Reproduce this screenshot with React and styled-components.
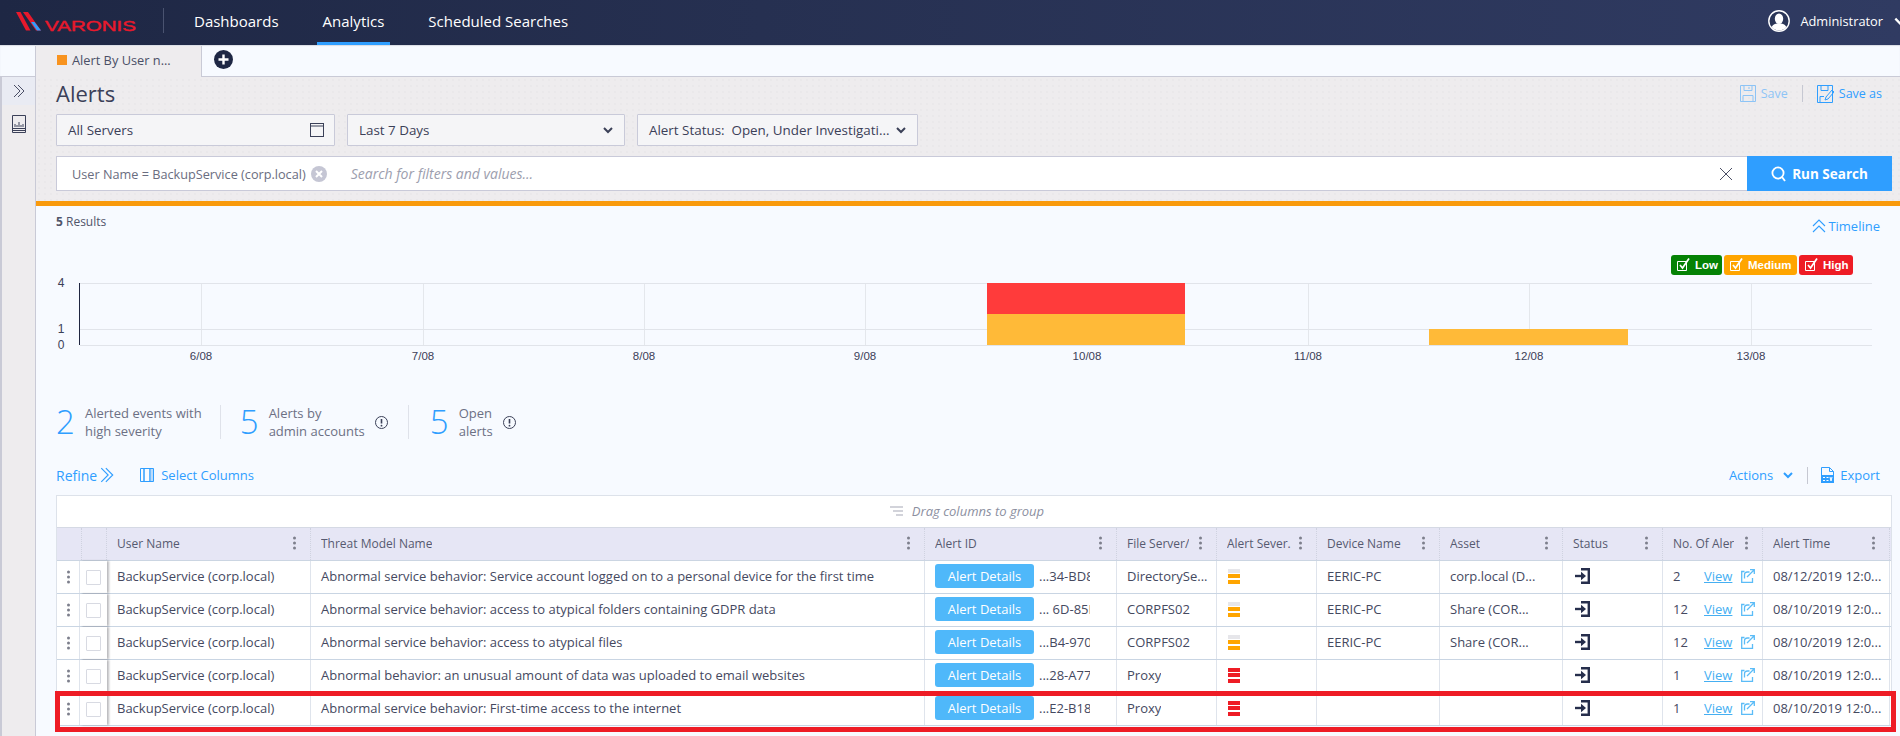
import React from "react";
import styled, { createGlobalStyle } from "styled-components";

const Global = createGlobalStyle`
  html, body { margin: 0; padding: 0; height: 736px; overflow: hidden; background: #f7faff; }
  body { font-family: "Open Sans", "Noto Sans", sans-serif; color: #3b4058; }
  * { box-sizing: border-box; }
`;

const BLUE = "#2f9eff";
const COLS = "23px 27px 204px 614px 192px 100px 100px 123px 123px 100px 100px 127px";

const Page = styled.div`
  width: 1900px;
  height: 736px;
  overflow: hidden;
  display: flex;
  flex-direction: column;
`;

/* ---------- top bar ---------- */
const TopBar = styled.header`
  height: 45px;
  flex: none;
  display: flex;
  align-items: stretch;
  background: linear-gradient(90deg, #1e2744 0%, #263051 40%, #303b62 100%);
  color: #fff;
`;
const LogoBox = styled.div`
  width: 164px;
  display: flex;
  align-items: center;
  position: relative;
  &::after {
    content: "";
    position: absolute;
    right: 0;
    top: 8px;
    height: 25px;
    width: 1px;
    background: #4a5370;
  }
`;
const Nav = styled.nav`
  display: flex;
  gap: 32px;
  padding-left: 24px;
`;
const NavItem = styled.a`
  display: flex;
  align-items: center;
  padding: 0 6px 4px;
  font-size: 15px;
  border-bottom: 3px solid ${(p) => (p.$active ? BLUE : "transparent")};
  height: 45px;
  padding-top: 3px;
`;
const UserBox = styled.div`
  margin-left: auto;
  display: flex;
  align-items: center;
  font-size: 12.8px;
  gap: 10px;
  margin-right: -7px;
  padding-bottom: 4px;
`;

/* ---------- tabs ---------- */
const TabBar = styled.div`
  height: 32px;
  flex: none;
  display: flex;
  align-items: stretch;
  padding-left: 35px;
  background: #f7faff;
  border-bottom: 1px solid #c9cad6;
  box-shadow: inset 0 1px 1px #d9dce4;
`;
const Tab = styled.div`
  width: 167px;
  height: 32px;
  margin-top: 1px;
  padding-left: 21px;
  display: flex;
  align-items: center;
  gap: 5px;
  background: #eeecee;
  border: 1px solid #c9cad6;
  border-width: 0 1px 0 1px;
  font-size: 12.8px;
  color: #4b4f66;
  padding-bottom: 4px;
`;
const TabSquare = styled.span`
  width: 10px;
  height: 10px;
  background: #f8931f;
`;
const AddTab = styled.span`
  margin-left: 12px;
  align-self: center;
  margin-bottom: 3px;
  display: flex;
`;

/* ---------- body ---------- */
const Body = styled.div`
  flex: 1;
  display: flex;
  min-height: 0;
`;
const Sidebar = styled.aside`
  width: 36px;
  flex: none;
  background: #eeecee;
  border-left: 2px solid #c9cad6;
  border-right: 1px solid #c9cad6;
  display: flex;
  flex-direction: column;
  align-items: center;
  color: #4b4f66;
`;
const SideToggle = styled.div`
  width: 100%;
  height: 28px;
  background: #e9ebf3;
  display: flex;
  align-items: center;
  justify-content: center;
  margin-bottom: 10px;
`;
const Main = styled.main`
  flex: 1;
  min-width: 0;
  display: flex;
  flex-direction: column;
`;
const Toolbar = styled.section`
  height: 124px;
  flex: none;
  padding: 0 8px 0 20px;
  background-color: #eeecee;
  background-image: radial-gradient(#e4e2e5 0.6px, transparent 0.8px);
  background-size: 6px 6px;
`;
const TitleRow = styled.div`
  height: 37px;
  display: flex;
  align-items: center;
  justify-content: space-between;
`;
const Title = styled.h1`
  margin: 0 0 6px;
  font-size: 22px;
  font-weight: 400;
  color: #3b4058;
  line-height: 30px;
`;
const TitleActions = styled.div`
  display: flex;
  align-items: center;
  font-size: 12.5px;
  color: ${BLUE};
  padding-right: 10px;
  padding-bottom: 4px;
`;
const TitleAction = styled.span`
  display: flex;
  align-items: center;
  gap: 5px;
  opacity: ${(p) => (p.$dim ? 0.5 : 1)};
`;
const VSep = styled.span`
  width: 1px;
  height: 17px;
  background: #c6c8d2;
  margin: 0 ${(p) => p.$gap || 15}px;
`;
const FilterRow = styled.div`
  display: flex;
  gap: 12px;
  height: 32px;
`;
const Select = styled.div`
  width: ${(p) => p.$w}px;
  height: 32px;
  padding: 0 10px 0 11px;
  display: flex;
  align-items: center;
  justify-content: space-between;
  background: #f5f5f7;
  border: 1px solid #c9cad9;
  border-radius: 1px;
  font-size: 13.4px;
  font-weight: 500;
  color: #3b4058;
  white-space: pre;
`;
const SearchRow = styled.div`
  margin-top: 10px;
  height: 35px;
  display: flex;
`;
const SearchBox = styled.div`
  flex: 1;
  display: flex;
  align-items: center;
  background: #fff;
  border: 1px solid #c9cad9;
  border-right: 0;
  padding: 0 14px 0 15px;
  font-size: 12.7px;
`;
const Chip = styled.span`
  display: flex;
  align-items: center;
  gap: 5px;
  color: #6a6d80;
  white-space: pre;
`;
const Placeholder = styled.span`
  margin-left: 24px;
  font-style: italic;
  font-size: 14px;
  color: #9c9eae;
  flex: 1;
`;
const RunButton = styled.button`
  width: 145px;
  border: 0;
  background: ${BLUE};
  color: #fff;
  font: 700 13.5px "Open Sans", sans-serif;
  display: flex;
  align-items: center;
  justify-content: center;
  gap: 6px;
`;
const Results = styled.section`
  flex: 1;
  min-height: 0;
  border-top: 5px solid #f99a0c;
  padding: 0 8px 0 20px;
  background: #f7faff;
`;
const ResultsHead = styled.div`
  height: 49px;
  display: flex;
  justify-content: space-between;
  align-items: flex-start;
  font-size: 12px;
  color: #50546a;
  padding-top: 7px;
`;
const TimelineLink = styled.span`
  display: flex;
  align-items: center;
  gap: 2px;
  margin: 4px 12px 0 0;
  font-size: 13px;
  color: ${BLUE};
`;
const Legend = styled.div`
  height: 20px;
  display: flex;
  justify-content: flex-end;
  gap: 2px;
  padding-right: 39px;
`;
const LegendTag = styled.span`
  height: 20px;
  width: ${(p) => p.$w}px;
  padding-left: 5px;
  display: flex;
  align-items: center;
  gap: 3px;
  background: ${(p) => p.$c};
  border-radius: 3px;
  font: 700 11.5px "Liberation Sans", Arial, sans-serif;
  color: #fff;
`;
const ChartSvg = styled.svg`
  display: block;
  font-family: "Liberation Sans", Arial, sans-serif;
`;
const Stats = styled.div`
  margin-top: 35px;
  height: 34px;
  display: flex;
`;
const Stat = styled.div`
  display: flex;
  align-items: center;
  padding: 0 ${(p) => p.$pr}px 0 ${(p) => p.$pl}px;
  border-right: ${(p) => (p.$last ? "0" : "1px solid #dfe2ea")};
`;
const StatNum = styled.span`
  font-size: 33px;
  font-weight: 300;
  line-height: 34px;
  color: ${BLUE};
  width: 29px;
`;
const StatLabel = styled.span`
  font-size: 13px;
  line-height: 18px;
  color: #6c7084;
  white-space: pre;
`;
const InfoIcon = styled.span`
  display: flex;
  margin-left: 10px;
  color: #3b4058;
`;
const ActionRow = styled.div`
  margin-top: 24px;
  height: 24px;
  display: flex;
  align-items: center;
  font-size: 13px;
  color: ${BLUE};
`;
const RefineLink = styled.span`
  display: flex;
  align-items: center;
  gap: 2px;
  font-size: 14px;
  margin-right: 25px;
`;
const IconLink = styled.span`
  display: flex;
  align-items: center;
  gap: ${(p) => p.$gap || 7}px;
`;
const RowEnd = styled.div`
  margin-left: auto;
  display: flex;
  align-items: center;
  padding-right: 12px;
`;
const Table = styled.div`
  margin-top: 8px;
  width: 1836px;
  background: #fff;
  border: 1px solid #dde2ea;
  border-bottom: 0;
`;
const GroupBar = styled.div`
  height: 31px;
  display: flex;
  align-items: center;
  justify-content: center;
  gap: 9px;
  font-size: 13px;
  font-style: italic;
  color: #8c8f9f;
  padding: 0 14px 2px 0;
`;
const HeadRow = styled.div`
  display: grid;
  grid-template-columns: ${COLS};
  height: 34px;
  background: #e6e6f5;
  border-top: 1px solid #d5d9e4;
  border-bottom: 1px solid #cbd5e2;
`;
const HeadCell = styled.div`
  display: flex;
  align-items: center;
  justify-content: space-between;
  padding: 0 14px 2px 10px;
  font-size: 12px;
  color: #565a70;
  border-right: 1px dotted #cfd2e0;
  white-space: nowrap;
  overflow: hidden;
`;
const Row = styled.div`
  display: grid;
  grid-template-columns: ${COLS};
  height: 33px;
  background: #fff;
  border-bottom: 1px solid #c9d5e3;
  position: relative;
  ${(p) =>
    p.$flagged &&
    `&::after {
      content: "";
      position: absolute;
      left: -2px;
      right: -5px;
      top: -2px;
      bottom: -7px;
      border: 5px solid #ee1c25;
      pointer-events: none;
    }`}
`;
const Cell = styled.div`
  display: flex;
  align-items: center;
  min-width: 0;
  padding: 0 ${(p) => p.$pr ?? 8}px 2px 10px;
  font-size: 13px;
  color: #45495f;
  border-right: 1px solid #dfe4ec;
  white-space: nowrap;
  overflow: hidden;
`;
const Clip = styled.span`
  overflow: hidden;
  text-overflow: ellipsis;
`;
const HandleCell = styled.div`
  display: flex;
  align-items: center;
  justify-content: center;
  border-right: 1px solid #dfe4ec;
`;
const CheckCell = styled.div`
  display: flex;
  align-items: center;
  justify-content: center;
  box-shadow: 2px 0 2px rgba(60, 60, 70, 0.35);
  position: relative;
`;
const CheckBox = styled.span`
  width: 15px;
  height: 15px;
  border: 1px solid #d8dae2;
  border-radius: 1px;
  background: #fff;
`;
const DetailsButton = styled.span`
  flex: none;
  width: 99px;
  height: 24px;
  margin-right: 5px;
  display: flex;
  align-items: center;
  justify-content: center;
  background: #4fb8fa;
  border-radius: 3px;
  color: #fff;
  font-size: 13px;
`;
const IdTail = styled.span`
  width: 51px;
  overflow: hidden;
`;
const SeverityIcon = styled.span`
  display: flex;
  flex-direction: column;
  gap: 1.5px;
  margin-left: 1px;
`;
const SeverityBar = styled.i`
  display: block;
  width: 12px;
  height: 4px;
  background: ${(p) => p.$c};
`;
const CountCell = styled(Cell)`
  padding-right: 6px;
`;
const Count = styled.span`
  width: 31px;
`;
const ViewLink = styled.span`
  color: #45aff2;
  text-decoration: underline;
  margin-right: 9px;
`;
const StatusIconBox = styled.span`
  display: flex;
  color: #262e4c;
  margin-left: 2px;
`;

/* ---------- drawings ---------- */
const Logo = () => (
  <svg width="130" height="28" viewBox="0 0 130 28" style={{ marginLeft: 14 }}>
    <polygon points="2,3 6.5,3 16.5,21.5 12,21.5" fill="#e8192c" />
    <polygon points="9,3 14,3 27,21.5 22,21.5" fill="#e8192c" />
    <polygon points="17,13 20.5,13 27,21.5 23,21.5" fill="#2f9eff" />
    <text x="31" y="22" fontFamily="Liberation Sans, Arial, sans-serif" fontWeight="400" fontSize="15.3" fill="#e8192c" stroke="#e8192c" strokeWidth="0.4" textLength="91" lengthAdjust="spacingAndGlyphs">VARONIS</text>
  </svg>
);
const Kebab = () => (
  <svg width="3" height="14" viewBox="0 0 3 14" style={{ flex: "none" }}>
    <circle cx="1.5" cy="2" r="1.5" fill="#7d7f8c" />
    <circle cx="1.5" cy="7" r="1.5" fill="#7d7f8c" />
    <circle cx="1.5" cy="12" r="1.5" fill="#7d7f8c" />
  </svg>
);
const Chevron = ({ s = 12, w = 2 }) => (
  <svg width={s} height={s} viewBox="0 0 12 12" fill="none" stroke="currentColor" strokeWidth={w}>
    <path d="M2 4l4 4 4-4" />
  </svg>
);
const DoubleRight = ({ s = 14, w = 1 }) => (
  <svg width={s} height={s} viewBox="0 0 14 14" fill="none" stroke="currentColor" strokeWidth={w}>
    <path d="M2 1l6 6-6 6M6 1l6 6-6 6" />
  </svg>
);
const DoubleUp = () => (
  <svg width="14" height="14" viewBox="0 0 14 14" fill="none" stroke="currentColor" strokeWidth="1.1">
    <path d="M1 7l6-6 6 6M1 13l6-6 6 6" />
  </svg>
);
const CalendarBox = () => (
  <svg width="14" height="14" viewBox="0 0 14 14" fill="none" stroke="#3b4058">
    <rect x="0.5" y="0.5" width="13" height="13" />
    <path d="M0 3h14" />
  </svg>
);
const SaveIcon = () => (
  <svg width="16" height="17" viewBox="0 0 16 17" fill="none" stroke="currentColor">
    <path d="M.5.5h15v16H.5z" />
    <path d="M4 .5v5h8v-5M3 16.5v-6h10v6M9 2v2" />
  </svg>
);
const SaveAsIcon = () => (
  <svg width="17" height="18" viewBox="0 0 17 18" fill="none" stroke="currentColor">
    <path d="M.5.5h15v17H.5z" />
    <path d="M4 .5v5h7v-5M3 17.5v-6h4M8 15l1-3 6-7 2 2-6 7-3 1z" />
  </svg>
);
const SearchIcon = () => (
  <svg width="15" height="16" viewBox="0 0 15 16" fill="none" stroke="#fff" strokeWidth="1.8">
    <circle cx="7" cy="7" r="5.6" />
    <path d="M11 11l3 4" />
  </svg>
);
const ClearX = () => (
  <svg width="14" height="14" viewBox="0 0 14 14" stroke="#4b4f66">
    <path d="M1 1l12 12M13 1L1 13" />
  </svg>
);
const ChipClose = () => (
  <svg width="16" height="16" viewBox="0 0 16 16">
    <circle cx="8" cy="8" r="8" fill="#c5c6d4" />
    <path d="M5 5l6 6M11 5l-6 6" stroke="#fff" strokeWidth="2" />
  </svg>
);
const PlusCircle = () => (
  <svg width="19" height="19" viewBox="0 0 19 19">
    <circle cx="9.5" cy="9.5" r="9.5" fill="#1e2744" />
    <path d="M9.5 4.5v10M4.5 9.5h10" stroke="#fff" strokeWidth="2.4" />
  </svg>
);
const UserIcon = () => (
  <svg width="22" height="22" viewBox="0 0 22 22">
    <circle cx="11" cy="11" r="10.2" fill="#2a3557" stroke="#fff" strokeWidth="1.4" />
    <ellipse cx="11" cy="8.8" rx="4.2" ry="5.2" fill="#fff" />
    <path d="M3.5 17c2-3 4.5-3.4 7.5-3.4s5.5.4 7.5 3.4a10 10 0 0 1-15 0z" fill="#fff" />
  </svg>
);
const ReportIcon = () => (
  <svg width="14" height="18" viewBox="0 0 14 18" fill="none" stroke="#3b4058">
    <path d="M.5.5h13v17H.5z" />
    <path d="M3 9v3M5 10v2M7 7v5M9 10v2M11 9v3" />
    <path d="M.5 13.5h13M.5 15.5h13" />
  </svg>
);
const BoxCheck = () => (
  <svg width="16" height="16" viewBox="0 0 16 16" fill="none" stroke="#fff">
    <path d="M1.5 4.5h9v9h-9z" />
    <path d="M4 8l2.5 3L13 1.5" strokeWidth="1.7" />
  </svg>
);
const InfoCircle = () => (
  <svg width="13" height="13" viewBox="0 0 13 13" fill="none" stroke="currentColor">
    <circle cx="6.5" cy="6.5" r="6" />
    <path d="M6.5 3v4.5" strokeWidth="1.6" />
    <circle cx="6.5" cy="9.7" r="0.9" fill="currentColor" stroke="none" />
  </svg>
);
const ColumnsIcon = () => (
  <svg width="14" height="14" viewBox="0 0 14 14" fill="#bcdcfb" stroke="currentColor">
    <path d="M.5.5h3.5v13H.5zM4 .5h6v13H4z" fill="none" />
    <path d="M10 .5h3.5v13H10z" />
  </svg>
);
const ExportIcon = () => (
  <svg width="13" height="16" viewBox="0 0 13 16" fill="none" stroke="currentColor">
    <path d="M.5 8V.5h8l4 4V8M8.5.5v4h4" />
    <rect x="0" y="8" width="13" height="8" fill="currentColor" stroke="none" />
    <path d="M2 10.5h2M2 13.5h2M5.5 10.5h2M5.5 13.5h2M9 10l1 4 1-4" stroke="#fff" />
  </svg>
);
const GroupIcon = () => (
  <svg width="13" height="10" viewBox="0 0 13 10" stroke="#a5a7b5">
    <path d="M0 1h13M3 5h10M6 9h7" />
  </svg>
);
const StatusIcon = () => (
  <svg width="15" height="16" viewBox="0 0 15 16" fill="none" stroke="currentColor">
    <path d="M6 1.2h7.8v13.6H6" strokeWidth="2.4" />
    <path d="M0 8h8" strokeWidth="2.4" />
    <path d="M6 3.8L11 8l-5 4.2z" fill="currentColor" stroke="none" />
  </svg>
);
const ExternalIcon = () => (
  <svg width="14" height="14" viewBox="0 0 14 14" fill="none" stroke="#5bbcf7" strokeWidth="1.3">
    <path d="M3.5 2.5H.7v10.8h10.8V9" />
    <path d="M3.5 9.5V6c0-2 1-3 3-3h2" />
    <path d="M9 .7h4.3V5M13 1L6 8" />
  </svg>
);

const days = [
  [201, "6/08"], [423, "7/08"], [644, "8/08"], [865, "9/08"],
  [1087, "10/08"], [1308, "11/08"], [1529, "12/08"], [1751, "13/08"],
];
const Chart = () => (
  <ChartSvg width="1836" height="95" viewBox="56 275 1836 95">
    {days.map(([x]) => (
      <line key={x} x1={x + 0.5} x2={x + 0.5} y1="283" y2="345" stroke="#e4e7ec" />
    ))}
    <path d="M80 283.5H1872M80 329.5H1872M80 345.5H1872" stroke="#e1e4ea" strokeWidth="1" />
    <path d="M79.5 283V345" stroke="#1f2540" />
    <rect x="987" y="283" width="198" height="31" fill="#ff3b3b" />
    <rect x="987" y="314" width="198" height="31" fill="#ffba38" />
    <rect x="1429" y="329" width="199" height="16" fill="#ffba38" />
    {[[4, 287], [1, 333], [0, 349]].map(([v, y]) => (
      <text key={v} x="61" y={y} fontSize="12" textAnchor="middle" fill="#3b4058">{v}</text>
    ))}
    {days.map(([x, t]) => (
      <text key={t} x={x} y="360" fontSize="11.5" textAnchor="middle" fill="#3b4058">{t}</text>
    ))}
  </ChartSvg>
);

const headers = ["User Name", "Threat Model Name", "Alert ID", "File Server/", "Alert Sever.", "Device Name", "Asset", "Status", "No. Of Aler", "Alert Time"];
const ORANGE = "#ffa500";
const RED = "#ee1c25";
const rows = [
  { threat: "Abnormal service behavior: Service account logged on to a personal device for the first time", id: "...34-BD88", server: "DirectorySe...", sev: "m", device: "EERIC-PC", asset: "corp.local (D...", n: 2, time: "08/12/2019 12:0..." },
  { threat: "Abnormal service behavior: access to atypical folders containing GDPR data", id: "... 6D-85B8", server: "CORPFS02", sev: "m", device: "EERIC-PC", asset: "Share (COR...", n: 12, time: "08/10/2019 12:0..." },
  { threat: "Abnormal service behavior: access to atypical files", id: "...B4-9700", server: "CORPFS02", sev: "m", device: "EERIC-PC", asset: "Share (COR...", n: 12, time: "08/10/2019 12:0..." },
  { threat: "Abnormal behavior: an unusual amount of data was uploaded to email websites", id: "...28-A777", server: "Proxy", sev: "h", device: "", asset: "", n: 1, time: "08/10/2019 12:0..." },
  { threat: "Abnormal service behavior: First-time access to the internet", id: "...E2-B18", server: "Proxy", sev: "h", device: "", asset: "", n: 1, time: "08/10/2019 12:0...", flagged: true },
];

export default function App() {
  return (
    <Page>
      <Global />
      <TopBar>
        <LogoBox><Logo /></LogoBox>
        <Nav>
          <NavItem>Dashboards</NavItem>
          <NavItem $active>Analytics</NavItem>
          <NavItem>Scheduled Searches</NavItem>
        </Nav>
        <UserBox>
          <UserIcon />
          <span>Administrator</span>
          <Chevron s={14} />
        </UserBox>
      </TopBar>
      <TabBar>
        <Tab><TabSquare />Alert By User n...</Tab>
        <AddTab><PlusCircle /></AddTab>
      </TabBar>
      <Body>
        <Sidebar>
          <SideToggle><DoubleRight /></SideToggle>
          <ReportIcon />
        </Sidebar>
        <Main>
          <Toolbar>
            <TitleRow>
              <Title>Alerts</Title>
              <TitleActions>
                <TitleAction $dim><SaveIcon />Save</TitleAction>
                <VSep $gap={14} />
                <TitleAction><SaveAsIcon />Save as</TitleAction>
              </TitleActions>
            </TitleRow>
            <FilterRow>
              <Select $w={279}>All Servers<CalendarBox /></Select>
              <Select $w={278}>Last 7 Days<Chevron /></Select>
              <Select $w={281}>{"Alert Status:  Open, Under Investigati..."}<Chevron /></Select>
            </FilterRow>
            <SearchRow>
              <SearchBox>
                <Chip>User Name = BackupService (corp.local)<ChipClose /></Chip>
                <Placeholder>Search for filters and values...</Placeholder>
                <ClearX />
              </SearchBox>
              <RunButton><SearchIcon />Run Search</RunButton>
            </SearchRow>
          </Toolbar>
          <Results>
            <ResultsHead>
              <span><b>5</b> Results</span>
              <TimelineLink><DoubleUp />Timeline</TimelineLink>
            </ResultsHead>
            <Legend>
              <LegendTag $c="#058205" $w={51}><BoxCheck />Low</LegendTag>
              <LegendTag $c="#ffa500" $w={73}><BoxCheck />Medium</LegendTag>
              <LegendTag $c="#ee1c25" $w={54}><BoxCheck />High</LegendTag>
            </Legend>
            <Chart />
            <Stats>
              <Stat $pl={0} $pr={18}><StatNum>2</StatNum><StatLabel>{"Alerted events with\nhigh severity"}</StatLabel></Stat>
              <Stat $pl={19} $pr={20}><StatNum>5</StatNum><StatLabel>{"Alerts by\nadmin accounts"}</StatLabel><InfoIcon><InfoCircle /></InfoIcon></Stat>
              <Stat $pl={21} $pr={20} $last><StatNum>5</StatNum><StatLabel>{"Open\nalerts"}</StatLabel><InfoIcon><InfoCircle /></InfoIcon></Stat>
            </Stats>
            <ActionRow>
              <RefineLink>Refine<DoubleRight s={16} /></RefineLink>
              <IconLink><ColumnsIcon />Select Columns</IconLink>
              <RowEnd>
                <IconLink $gap={9}>Actions<Chevron /></IconLink>
                <VSep $gap={13} />
                <IconLink $gap={6}><ExportIcon />Export</IconLink>
              </RowEnd>
            </ActionRow>
            <Table>
              <GroupBar><GroupIcon />Drag columns to group</GroupBar>
              <HeadRow>
                <HeadCell />
                <HeadCell />
                {headers.map((h) => (
                  <HeadCell key={h}><Clip>{h}</Clip><Kebab /></HeadCell>
                ))}
              </HeadRow>
              {rows.map((r) => (
                <Row key={r.threat} $flagged={r.flagged}>
                  <HandleCell><Kebab /></HandleCell>
                  <CheckCell><CheckBox /></CheckCell>
                  <Cell>BackupService (corp.local)</Cell>
                  <Cell>{r.threat}</Cell>
                  <Cell $pr={0}><DetailsButton>Alert Details</DetailsButton><IdTail>{r.id}</IdTail></Cell>
                  <Cell $pr={6}><Clip>{r.server}</Clip></Cell>
                  <Cell>
                    <SeverityIcon>
                      <SeverityBar $c={r.sev === "h" ? RED : "#e6e6ea"} />
                      <SeverityBar $c={r.sev === "h" ? RED : ORANGE} />
                      <SeverityBar $c={r.sev === "h" ? RED : ORANGE} />
                    </SeverityIcon>
                  </Cell>
                  <Cell>{r.device}</Cell>
                  <Cell>{r.asset}</Cell>
                  <Cell><StatusIconBox><StatusIcon /></StatusIconBox></Cell>
                  <CountCell><Count>{r.n}</Count><ViewLink>View</ViewLink><ExternalIcon /></CountCell>
                  <Cell $pr={4}>{r.time}</Cell>
                </Row>
              ))}
            </Table>
          </Results>
        </Main>
      </Body>
    </Page>
  );
}
